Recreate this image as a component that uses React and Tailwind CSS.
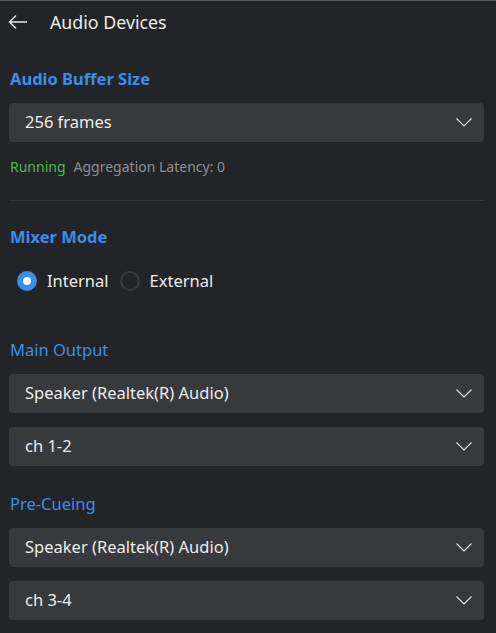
import { useState } from "react";

function Chevron() {
  return (
    <svg width="16" height="9" viewBox="0 0 16 9" fill="none" className="shrink-0">
      <path d="M0.5 0.5 L8 8 L15.5 0.5" stroke="#e6e6e6" strokeWidth="1.1" />
    </svg>
  );
}

function Select({ value }) {
  return (
    <div className="flex h-[39px] items-center justify-between rounded-[4px] bg-[#38393c] pl-[16px] pr-[12px]">
      <span className="text-[16.5px] text-[#ececec]">{value}</span>
      <Chevron />
    </div>
  );
}

function Radio({ checked, label, onClick }) {
  return (
    <button type="button" onClick={onClick} className="flex items-center gap-[10px]">
      {checked ? (
        <span className="flex h-[20px] w-[20px] items-center justify-center rounded-full bg-[#3b8eea]">
          <span className="h-[8px] w-[8px] rounded-full bg-white" />
        </span>
      ) : (
        <span className="h-[20px] w-[20px] rounded-full border-2 border-[#3a3b3e]" />
      )}
      <span className="text-[16.5px] text-[#ececec]">{label}</span>
    </button>
  );
}

export default function App() {
  const [mode, setMode] = useState("internal");

  return (
    <div
      className="min-h-[633px] w-[496px] border-t border-[#5c5c5c] bg-[#232427] pl-[9px] pr-[12px]"
      style={{ fontFamily: '"Noto Sans", "Open Sans", sans-serif' }}
    >
      {/* header */}
      <div className="flex h-[42px] items-center">
        <svg width="20" height="16" viewBox="0 0 20 16" fill="none" className="ml-[-1px]">
          <path d="M19 8 H2 M8 1.5 L1.5 8 L8 14.5" stroke="#e8e8e8" strokeWidth="1.4" />
        </svg>
        <span className="ml-[22px] text-[17.8px] text-[#ececec]">Audio Devices</span>
      </div>

      {/* buffer */}
      <div className="mt-[24px] pl-[1px] text-[16.5px] font-bold text-[#3b8eea]">Audio Buffer Size</div>
      <div className="mt-[11px]">
        <Select value="256 frames" />
      </div>
      <div className="mt-[14px] flex gap-[8px] pl-[1px] text-[14px]">
        <span className="text-[#4cbb4c]">Running</span>
        <span className="text-[#8f9094]">Aggregation Latency: 0</span>
      </div>

      <div className="mt-[23px] h-px bg-[#37383b]" />

      {/* mixer mode */}
      <div className="mt-[24px] pl-[1px] text-[16.5px] font-bold text-[#3b8eea]">Mixer Mode</div>
      <div className="mt-[19px] flex items-center gap-[11px] pl-[8px]">
        <Radio checked={mode === "internal"} label="Internal" onClick={() => setMode("internal")} />
        <Radio checked={mode === "external"} label="External" onClick={() => setMode("external")} />
      </div>

      {/* main output */}
      <div className="mt-[45px] pl-[1px] text-[16.5px] text-[#3b8eea]">Main Output</div>
      <div className="mt-[11px] flex flex-col gap-[14px]">
        <Select value="Speaker (Realtek(R) Audio)" />
        <Select value="ch 1-2" />
      </div>

      {/* pre-cueing */}
      <div className="mt-[26px] pl-[1px] text-[16.5px] text-[#3b8eea]">Pre-Cueing</div>
      <div className="mt-[11px] flex flex-col gap-[14px]">
        <Select value="Speaker (Realtek(R) Audio)" />
        <Select value="ch 3-4" />
      </div>
    </div>
  );
}
